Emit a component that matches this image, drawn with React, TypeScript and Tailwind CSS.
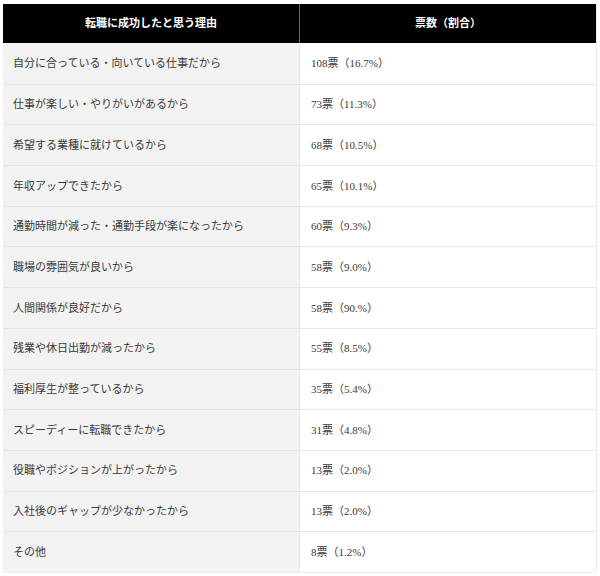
const rows: [string, string][] = [
  ['自分に合っている・向いている仕事だから', '108票（16.7%）'],
  ['仕事が楽しい・やりがいがあるから', '73票（11.3%）'],
  ['希望する業種に就けているから', '68票（10.5%）'],
  ['年収アップできたから', '65票（10.1%）'],
  ['通勤時間が減った・通勤手段が楽になったから', '60票（9.3%）'],
  ['職場の雰囲気が良いから', '58票（9.0%）'],
  ['人間関係が良好だから', '58票（90.%）'],
  ['残業や休日出勤が減ったから', '55票（8.5%）'],
  ['福利厚生が整っているから', '35票（5.4%）'],
  ['スピーディーに転職できたから', '31票（4.8%）'],
  ['役職やポジションが上がったから', '13票（2.0%）'],
  ['入社後のギャップが少なかったから', '13票（2.0%）'],
  ['その他', '8票（1.2%）'],
];

export default function App() {
  return (
    <div
      className="w-[600px] h-[576px] bg-white pt-[4px] px-[3px]"
      style={{ fontFamily: '"Liberation Serif", "Noto Sans CJK JP", serif' }}
    >
      <div className="w-[594px] border-r border-b border-[#ececec] rounded-b-[3px] overflow-hidden text-[11px] text-[#3a3a3a]">
        <div className="grid grid-cols-[297px_1fr] h-[39px] bg-black text-white font-bold">
          <div className="flex items-center justify-center border-r border-[#666]">転職に成功したと思う理由</div>
          <div className="flex items-center justify-center">票数（割合）</div>
        </div>
        {rows.map(([reason, votes], i) => (
          <div
            key={i}
            className={`grid grid-cols-[297px_1fr] h-[40.7px] ${i > 0 ? 'border-t border-[#e6e6e6]' : ''}`}
          >
            <div className="flex items-center pl-[10px] bg-[#f2f2f2] border-r border-[#e6e6e6]">{reason}</div>
            <div className="flex items-center pl-[11px] bg-white">{votes}</div>
          </div>
        ))}
      </div>
    </div>
  );
}
